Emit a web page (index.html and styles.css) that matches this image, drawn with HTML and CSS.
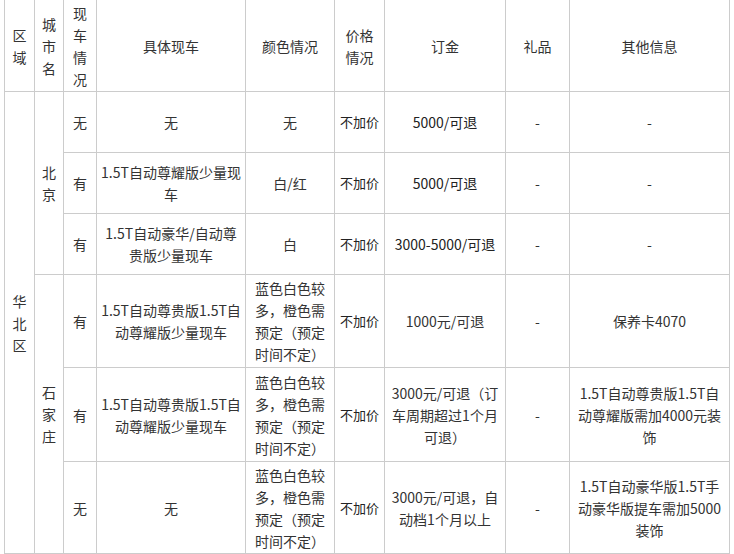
FILE: index.html
```html
<!DOCTYPE html>
<html lang="zh-CN">
<head>
<meta charset="utf-8">
<title>华北区现车情况</title>
<link rel="stylesheet" href="styles.css">
</head>
<body>
<table class="stock">
  <colgroup>
    <col class="c-region">
    <col class="c-city">
    <col class="c-has">
    <col class="c-car">
    <col class="c-color">
    <col class="c-price">
    <col class="c-deposit">
    <col class="c-gift">
    <col class="c-other">
  </colgroup>
  <thead>
    <tr class="r-head">
      <th>区<br>域</th>
      <th>城<br>市<br>名</th>
      <th>现<br>车<br>情<br>况</th>
      <th>具体现车</th>
      <th>颜色情况</th>
      <th>价格<br>情况</th>
      <th>订金</th>
      <th>礼品</th>
      <th>其他信息</th>
    </tr>
  </thead>
  <tbody>
    <tr class="r-short">
      <td rowspan="6">华<br>北<br>区</td>
      <td rowspan="3">北<br>京</td>
      <td>无</td>
      <td>无</td>
      <td>无</td>
      <td class="price">不加价</td>
      <td class="num">5000/可退</td>
      <td>-</td>
      <td>-</td>
    </tr>
    <tr class="r-short">
      <td>有</td>
      <td>1.5T自动尊耀版少量现<br>车</td>
      <td>白/红</td>
      <td class="price">不加价</td>
      <td class="num">5000/可退</td>
      <td>-</td>
      <td>-</td>
    </tr>
    <tr class="r-short">
      <td>有</td>
      <td>1.5T自动豪华/自动尊<br>贵版少量现车</td>
      <td>白</td>
      <td class="price">不加价</td>
      <td class="num">3000-5000/可退</td>
      <td>-</td>
      <td>-</td>
    </tr>
    <tr class="r-tall4">
      <td rowspan="3">石<br>家<br>庄</td>
      <td>有</td>
      <td>1.5T自动尊贵版1.5T自<br>动尊耀版少量现车</td>
      <td>蓝色白色较<br>多<span class="pu">，</span>橙色需<br>预定<span class="pu">（</span>预定<br>时间不定<span class="pu">）</span></td>
      <td class="price">不加价</td>
      <td>1000元/可退</td>
      <td>-</td>
      <td>保养卡4070</td>
    </tr>
    <tr class="r-tall5">
      <td>有</td>
      <td>1.5T自动尊贵版1.5T自<br>动尊耀版少量现车</td>
      <td>蓝色白色较<br>多<span class="pu">，</span>橙色需<br>预定<span class="pu">（</span>预定<br>时间不定<span class="pu">）</span></td>
      <td class="price">不加价</td>
      <td>3000元/可退<span class="pu">（</span>订<br>车周期超过1个月<br>可退<span class="pu">）</span></td>
      <td>-</td>
      <td>1.5T自动尊贵版1.5T自<br>动尊耀版需加4000元装<br>饰</td>
    </tr>
    <tr class="r-tall6">
      <td>无</td>
      <td>无</td>
      <td>蓝色白色较<br>多<span class="pu">，</span>橙色需<br>预定<span class="pu">（</span>预定<br>时间不定<span class="pu">）</span></td>
      <td class="price">不加价</td>
      <td>3000元/可退<span class="pu">，</span>自<br>动档1个月以上</td>
      <td>-</td>
      <td>1.5T自动豪华版1.5T手<br>动豪华版提车需加5000<br>装饰</td>
    </tr>
  </tbody>
</table>
</body>
</html>
```

FILE: styles.css
```css
html, body {
  margin: 0;
  padding: 0;
  background: #ffffff;
}

body {
  font-family: "Microsoft YaHei", "Noto Sans CJK SC", "Noto Sans", sans-serif;
  font-size: 14px;
  line-height: 22px;
  color: #333333;
}

.stock {
  border-collapse: collapse;
  table-layout: fixed;
  width: 726px;
  margin: -1px 0 0 4px;
}

.stock th,
.stock td {
  border: 1px solid #cccccc;
  padding: 0 3px;
  text-align: center;
  vertical-align: middle;
  white-space: nowrap;
  font-weight: normal;
  overflow: hidden;
}

.c-region { width: 30px; }
.c-city { width: 29px; }
.c-has { width: 33px; }
.c-car { width: 149px; }
.c-color { width: 89px; }
.c-price { width: 50px; }
.c-deposit { width: 121px; }
.c-gift { width: 64px; }
.c-other { width: 160px; }

.r-head { height: 92px; }
.r-short { height: 61px; }
.r-tall4 { height: 93px; }
.r-tall5 { height: 94px; }
.r-tall6 { height: 92px; }

.stock td.price {
  font-size: 13px;
  color: #222222;
  padding: 0;
}

.stock td.num {
  color: #222222;
}

.pu {
  font-family: "Noto Sans CJK TC", "Noto Sans CJK SC", sans-serif;
}
```
